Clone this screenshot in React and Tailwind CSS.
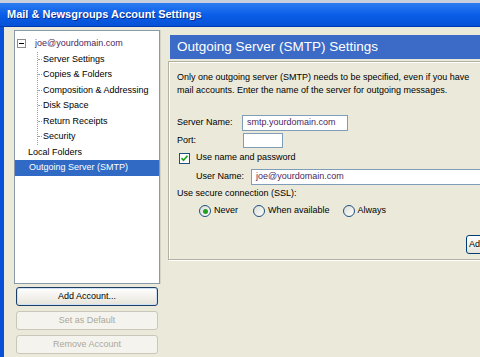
import React from "react";

const Check = () => (
  <svg width="9" height="9" viewBox="0 0 9 9">
    <path d="M1.5 4.2 L3.5 6.3 L7.5 1.8" fill="none" stroke="#21a121" strokeWidth="1.7" />
  </svg>
);

const Radio = ({ on }) => (
  <span className="w-[12px] h-[12px] rounded-full border border-[#1c5180] bg-linear-to-br from-[#dcdcd4] to-white flex items-center justify-center">
    {on && <span className="w-[5px] h-[5px] rounded-full bg-[#21a121]" />}
  </span>
);

const TreeChild = ({ label }) => (
  <div className="h-[15.5px] flex items-center">
    <span className="w-[4px] border-t border-dotted border-[#a0a0a0]" />
    <span className="ml-[1px]">{label}</span>
  </div>
);

const App = () => {
  return (
    <div className="w-[480px] h-[357px] overflow-hidden bg-[#ebe9d9] flex flex-col font-['Liberation_Sans',Arial,sans-serif] text-[9px] text-black">
      <div className="h-[3px] bg-[#c8d0de]" />
      <div className="h-[24px] shrink-0 bg-linear-to-b from-[#2c7cf2] via-[#0a5ee8] to-[#0651d6] flex items-center pl-[7px] text-white font-bold text-[11px] [text-shadow:1px_1px_0_#0b2c8a] border-b border-[#0038b0]">
        Mail &amp; Newsgroups Account Settings
      </div>
      <div className="flex flex-1 min-h-0">
        <div className="w-[4px] bg-[#0a4fd8] shrink-0" />

        {/* accounts tree */}
        <div className="w-[146px] ml-[10px] pt-[3px] shrink-0 flex flex-col">
          <div className="h-[254px] border border-[#8a9aa8] bg-white pt-[5px] shadow-[1px_0_0_#d6d4c6]">
            <div className="h-[15.5px] flex items-center pl-[2px]">
              <span className="w-[9px] h-[9px] border border-[#8c8c8c] flex items-center justify-center bg-white">
                <span className="w-[5px] border-t border-black" />
              </span>
              <span className="ml-[9px] text-[#4e1f5c]">joe@yourdomain.com</span>
            </div>
            <div className="pl-[22px]">
              <div className="border-l border-dotted border-[#a0a0a0]">
                <TreeChild label="Server Settings" />
                <TreeChild label="Copies & Folders" />
                <TreeChild label="Composition & Addressing" />
                <TreeChild label="Disk Space" />
                <TreeChild label="Return Receipts" />
                <TreeChild label="Security" />
              </div>
            </div>
            <div className="h-[15.5px] flex items-center pl-[13px]">Local Folders</div>
            <div className="h-[15.5px] flex items-center pl-[14px] bg-[#316ac5] text-white">
              Outgoing Server (SMTP)
            </div>
          </div>

          <div className="mx-[2px] mt-[3px] flex flex-col gap-[5px]">
            <button className="h-[19px] rounded-[3px] border border-[#1e3f68] bg-linear-to-b from-white to-[#e6e4da] text-black shadow-[inset_0_0_0_1px_#cde0f6]">
              Add Account...
            </button>
            <button className="h-[19px] rounded-[3px] border border-[#c9c7ba] bg-[#f4f3ee] text-[#aca899]">
              Set as Default
            </button>
            <button className="h-[19px] rounded-[3px] border border-[#c9c7ba] bg-[#f4f3ee] text-[#aca899]">
              Remove Account
            </button>
          </div>
        </div>

        {/* settings panel */}
        <div className="ml-[8px] pt-[8px] flex flex-col shrink-0 w-[340px]">
          <div className="ml-[2px] h-[24px] bg-[#3b6bc6] text-white text-[13.5px] flex items-center pl-[7px]">
            Outgoing Server (SMTP) Settings
          </div>
          <div className="mt-[2px] h-[199px] border border-[#b3b1a2] shadow-[inset_1px_1px_0_white,1px_1px_0_white] pl-[8px] pt-[9px] flex flex-col">
            <p className="leading-[13px] whitespace-nowrap">
              Only one outgoing server (SMTP) needs to be specified, even if you have
              <br />
              mail accounts. Enter the name of the server for outgoing messages.
            </p>

            <div className="mt-[18px] h-[16px] flex items-center">
              <span className="w-[65px]">Server Name:</span>
              <span className="w-[106px] h-[16px] border border-[#7f9db9] bg-white pl-[4px] flex items-center text-[#4e1f5c]">
                smtp.yourdomain.com
              </span>
            </div>
            <div className="mt-[2px] h-[15px] flex items-center">
              <span className="w-[66px]">Port:</span>
              <span className="w-[40px] h-[15px] border border-[#7f9db9] bg-white" />
            </div>

            <div className="mt-[4px] h-[12px] flex items-center pl-[2px]">
              <span className="w-[11px] h-[11px] border border-[#1c5180] bg-white flex items-center justify-center">
                <Check />
              </span>
              <span className="ml-[6px]">Use name and password</span>
            </div>

            <div className="mt-[5px] h-[16px] flex items-center pl-[19px]">
              <span className="w-[55px]">User Name:</span>
              <span className="w-[240px] h-[16px] border border-[#7f9db9] bg-white pl-[4px] flex items-center text-[#4e1f5c]">
                joe@yourdomain.com
              </span>
            </div>

            <div className="mt-[3px] h-[12px] flex items-center">Use secure connection (SSL):</div>

            <div className="mt-[5px] h-[12px] flex items-center pl-[22px]">
              <label className="flex items-center gap-[3px] mr-[15px]">
                <Radio on />
                Never
              </label>
              <label className="flex items-center gap-[3px] mr-[13px]">
                <Radio />
                When available
              </label>
              <label className="flex items-center gap-[3px]">
                <Radio />
                Always
              </label>
            </div>

            <div className="mt-[18px] flex">
              <button className="ml-[289px] h-[19px] px-[2px] rounded-[3px] border border-[#003c74] bg-linear-to-b from-white to-[#e6e4da]">
                Advanced...
              </button>
            </div>
          </div>
        </div>
      </div>
    </div>
  );
};

export default App;
